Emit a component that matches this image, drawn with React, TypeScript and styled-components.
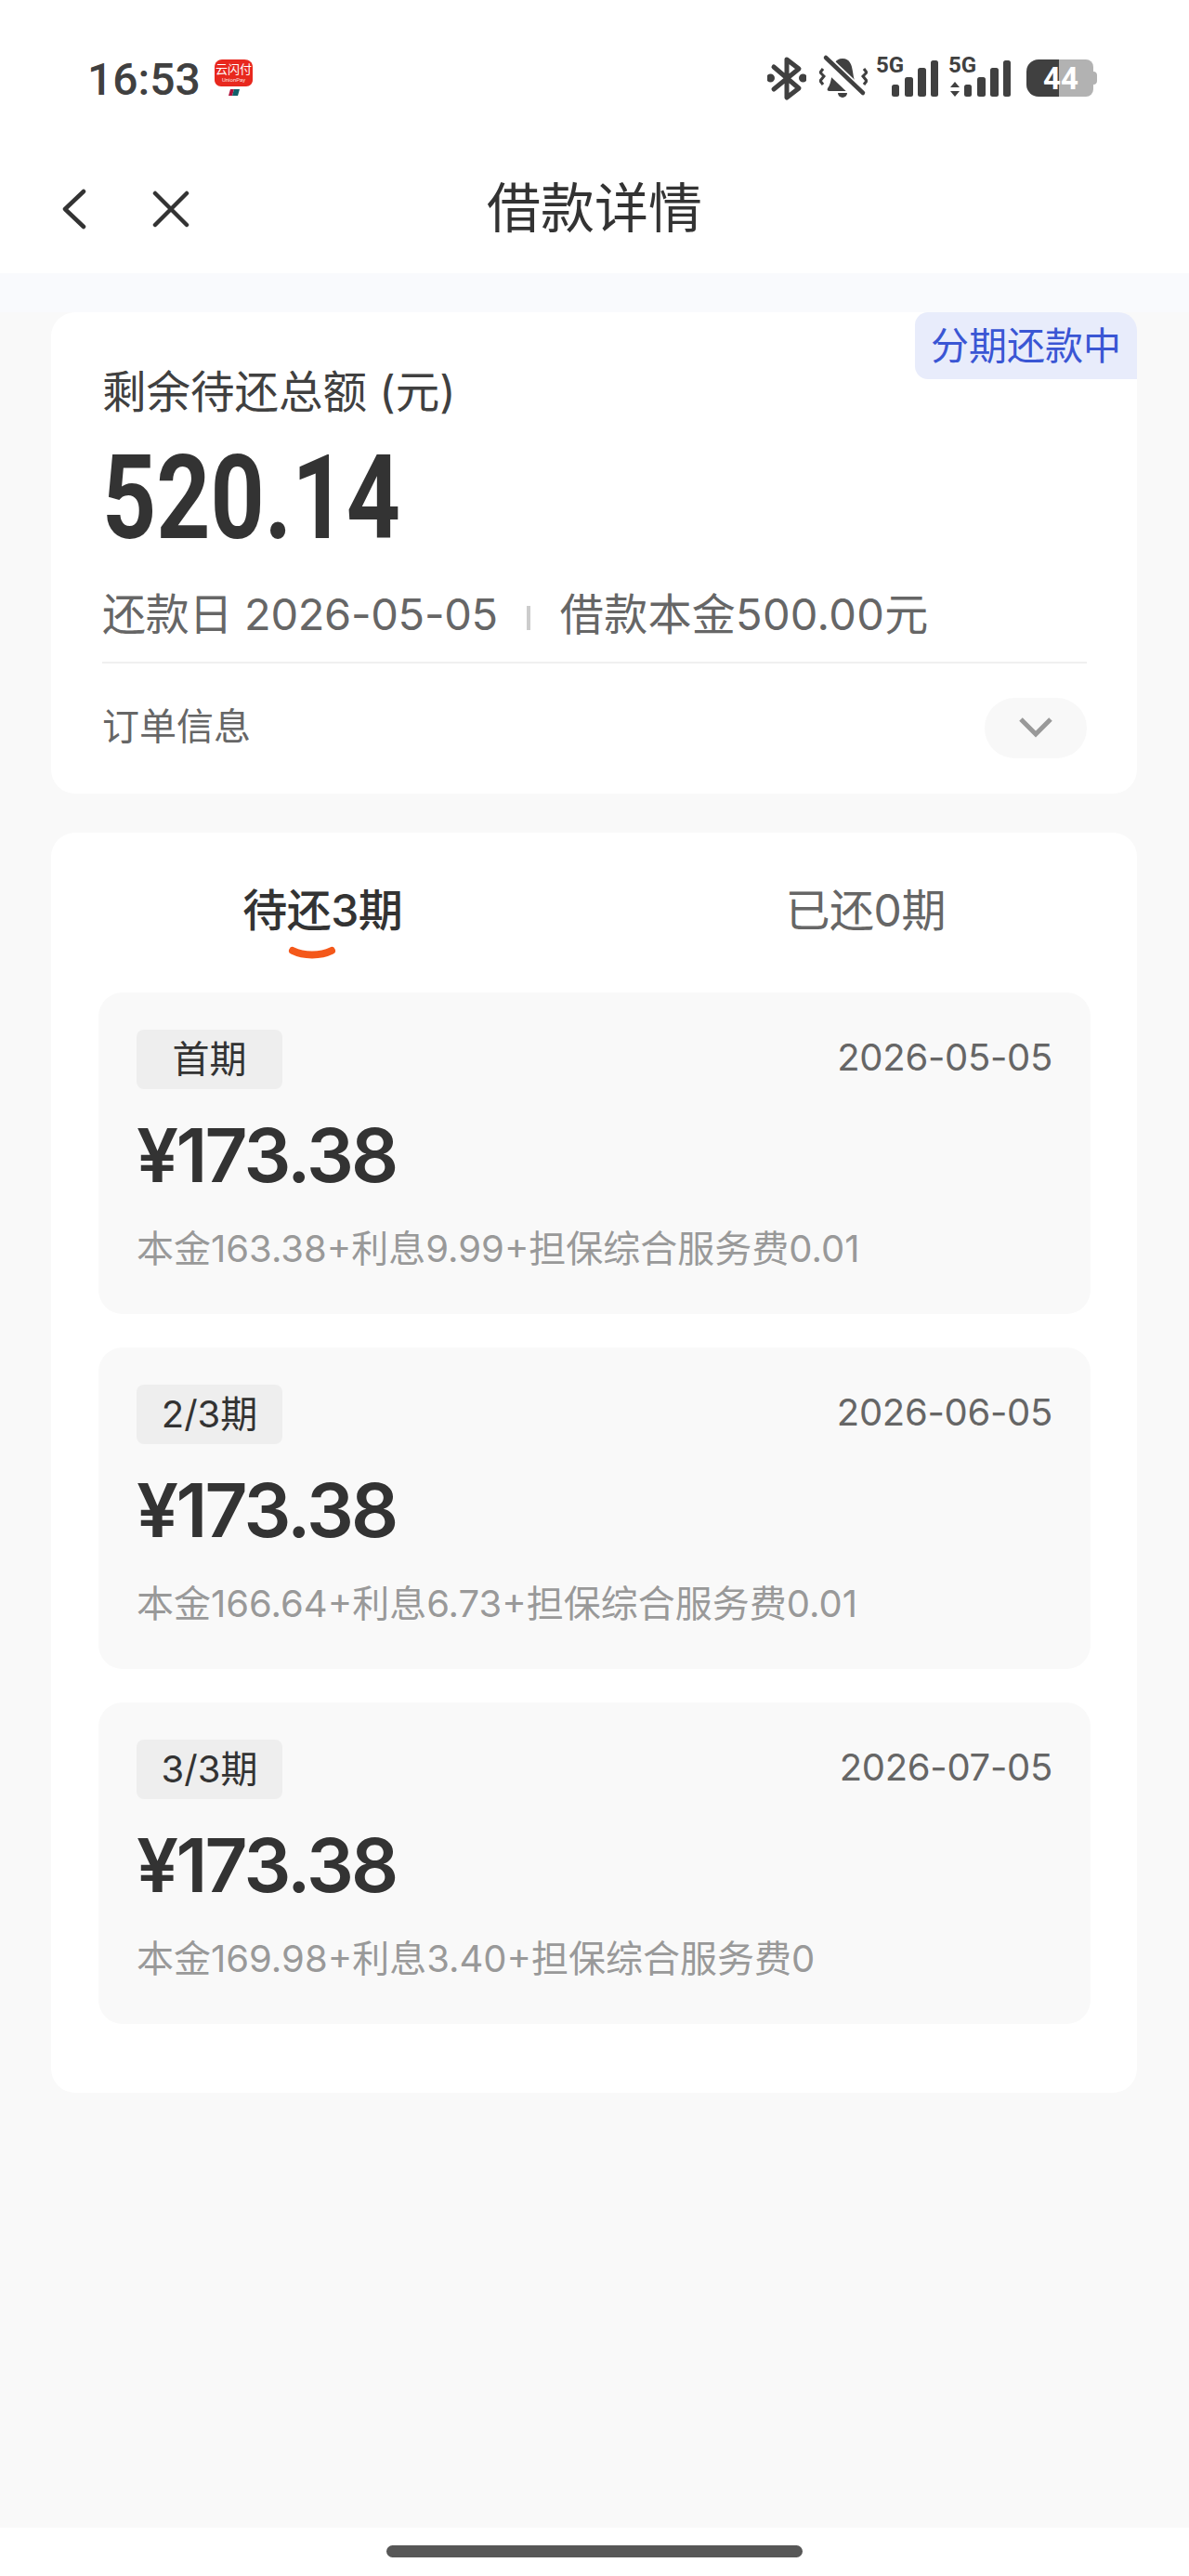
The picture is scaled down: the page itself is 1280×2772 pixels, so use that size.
import styled, { createGlobalStyle } from 'styled-components';

const GlobalStyle = createGlobalStyle`
  * { box-sizing: border-box; }
  html, body { margin: 0; padding: 0; background: #f9f9f9; }
  body { font-family: Inter, "Noto Sans CJK SC", sans-serif; }
`;

const Page = styled.div`
  width: 1280px;
  height: 2772px;
  display: flex;
  flex-direction: column;
  background: #f9f9f9;
  color: #333;
  overflow: hidden;
`;

const TopBar = styled.header`
  height: 294px;
  background: #fff;
  display: flex;
  flex-direction: column;
`;

const StatusBar = styled.div`
  height: 162px;
  padding: 55px 99px 0 94px;
  display: flex;
  justify-content: space-between;
  align-items: flex-start;
`;

const StatusLeft = styled.div`
  margin-top: 5px;
  display: flex;
  align-items: flex-start;
  gap: 14px;
`;

const Clock = styled.span`
  font: 500 48px/52px Roboto, sans-serif;
  color: #404040;
`;

const LogoMark = styled.svg`
  margin-top: 3px;
`;

const StatusIcons = styled.div`
  display: flex;
  align-items: flex-start;
`;

const StatusGlyph = styled.svg<{ $gap?: number; $top?: number }>`
  margin-left: ${p => p.$gap ?? 0}px;
  margin-top: ${p => p.$top ?? 0}px;
`;

const NavBar = styled.nav`
  position: relative;
  height: 122px;
  padding: 3px 0 0 67px;
  display: flex;
  align-items: center;
  gap: 71px;
`;

const Title = styled.h1`
  position: absolute;
  left: 0;
  right: 0;
  margin: 0 0 9px;
  text-align: center;
  font: 400 58px/70px "Noto Sans CJK SC", sans-serif;
  color: #333;
  pointer-events: none;
`;

const Band = styled.div`
  height: 42px;
  background: #f9fafd;
`;

const Main = styled.main`
  flex: 1;
  padding: 0 56px 0 55px;
  display: flex;
  flex-direction: column;
  gap: 42px;
`;

const Card = styled.section`
  position: relative;
  background: #fff;
  border-radius: 26px;
`;

const SummaryCard = styled(Card)`
  height: 518px;
  padding: 56px 54px 0 55px;
`;

const StateTag = styled.div`
  position: absolute;
  top: 0;
  right: 0;
  width: 239px;
  height: 72px;
  padding-bottom: 7px;
  background: #e8ecfb;
  border-radius: 14px 20px 0 14px;
  display: flex;
  align-items: center;
  justify-content: center;
  font: 400 41px/60px "Noto Sans CJK SC", sans-serif;
  color: #3a56d4;
`;

const SummaryLabel = styled.div`
  font: 400 47.5px/60px Inter, "Noto Sans CJK SC", sans-serif;
  color: #404040;
`;

const BigAmount = styled.div`
  margin-top: 22px;
  font: 700 127px/124px Roboto, sans-serif;
  color: #333;
  transform: scaleX(0.8);
  transform-origin: left center;
`;

const MetaRow = styled.div`
  margin-top: 32px;
  height: 62px;
  display: flex;
  align-items: center;
  font: 400 47px/62px Inter, "Noto Sans CJK SC", sans-serif;
  color: #666;
`;

const MetaText = styled.span<{ $spacing: number }>`
  letter-spacing: ${p => p.$spacing}px;
`;

const MetaDivider = styled.span`
  width: 4px;
  height: 26px;
  margin: 8px 32px 0 31px;
  background: #ccc;
`;

const Rule = styled.div`
  height: 2px;
  margin-top: 20px;
  background: #f0f0f0;
`;

const OrderRow = styled.div`
  height: 138px;
  display: flex;
  align-items: center;
  justify-content: space-between;
  font: 400 40px/50px "Noto Sans CJK SC", sans-serif;
  color: #666;
`;

const OrderLabel = styled.span`
  margin-bottom: 8px;
`;

const Toggle = styled.div`
  width: 110px;
  height: 65px;
  border-radius: 33px;
  background: #f8f8f8;
  display: flex;
  align-items: center;
  justify-content: center;
`;

const PlanCard = styled(Card)`
  height: 1356px;
`;

const Tabs = styled.div`
  height: 172px;
  display: grid;
  grid-template-columns: 1fr 1fr;
`;

const Tab = styled.div<{ $active?: boolean }>`
  position: relative;
  display: flex;
  justify-content: center;
  padding-top: 54px;
  font: ${p => (p.$active ? 500 : 400)} 48px/60px Inter, "Noto Sans CJK SC", sans-serif;
  letter-spacing: -0.5px;
  color: ${p => (p.$active ? '#333' : '#666')};
`;

const TabMark = styled.svg`
  position: absolute;
  left: calc(50% - 37px);
  top: 122px;
`;

const Installments = styled.div`
  margin: 0 50px 0 51px;
  display: flex;
  flex-direction: column;
  gap: 36px;
`;

const Installment = styled.article`
  height: 346px;
  padding: 40px 41px 0 41px;
  border-radius: 26px;
  background: #f9f9f9;
`;

const InstallmentHead = styled.div`
  display: flex;
  justify-content: space-between;
  align-items: flex-start;
`;

const Badge = styled.span`
  width: 157px;
  height: 64px;
  border-radius: 8px;
  background: #eee;
  display: flex;
  align-items: center;
  justify-content: center;
  font: 400 40px/64px Inter, "Noto Sans CJK SC", sans-serif;
  color: #333;
`;

const DueDate = styled.span`
  padding-top: 2px;
  font: 400 40px/56px Inter, sans-serif;
  letter-spacing: -0.3px;
  color: #666;
`;

const Amount = styled.div`
  margin-top: 21px;
  font: 560 80px/100px Inter, sans-serif;
  letter-spacing: -2.7px;
  color: #333;
`;

const Breakdown = styled.div`
  margin-top: 23px;
  font: 400 40px/56px Inter, "Noto Sans CJK SC", sans-serif;
  color: #999;
`;

const HomeArea = styled.div`
  height: 52px;
  background: #fff;
  display: flex;
  justify-content: center;
  padding-top: 19px;
`;

const HomeBar = styled.div`
  width: 448px;
  height: 13px;
  border-radius: 7px;
  background: #575757;
`;

const PayLogo = () => (
  <LogoMark width="44" height="42" viewBox="0 0 44 42">
    <path d="M9 1h24c5 0 9 3 9 8v14c0 4-3 7-7 7H8c-4 0-7-3-7-7V9c0-5 4-8 8-8z" fill="#e8281e" />
    <text x="21.5" y="16" textAnchor="middle" fontFamily="Noto Sans CJK SC" fontSize="13" fill="#fff">云闪付</text>
    <text x="21.5" y="25" textAnchor="middle" fontFamily="Roboto" fontSize="6" fill="#fff" opacity=".85">UnionPay</text>
    <path d="M18 33h4l-2 7h-4z" fill="#b0123c" />
    <path d="M22 33h6l-2 7h-6z" fill="#10606a" />
  </LogoMark>
);

const Signal = ({ roaming, gap }: { roaming?: boolean; gap: number }) => (
  <StatusGlyph $gap={gap} width="67" height="55" viewBox="0 0 67 55" fill="#404040">
    <text x="0" y="23" fontFamily="Roboto" fontWeight="700" fontSize="24">5G</text>
    {roaming && <path d="M2 39l5-6 5 6zM2 43l5 6 5-6z" />}
    <rect x="17" y="36" width="8" height="13" rx="2.5" />
    <rect x="31" y="28" width="9" height="21" rx="2.5" />
    <rect x="45" y="18" width="9" height="31" rx="2.5" />
    <rect x="59" y="10" width="8" height="39" rx="2.5" />
  </StatusGlyph>
);

const Battery = () => (
  <StatusGlyph $gap={17} $top={9} width="76" height="40" viewBox="0 0 76 40">
    <path d="M35 0h29a8 8 0 0 1 8 8v24a8 8 0 0 1-8 8H35z" fill="#b2b2b2" />
    <path d="M13 0h22v40H13A13 13 0 0 1 0 27V13A13 13 0 0 1 13 0z" fill="#404040" />
    <path d="M72 13c3 0 4 2 4 4v6c0 2-1 4-4 4z" fill="#b2b2b2" />
    <text x="37" y="32" textAnchor="middle" fontFamily="Roboto" fontWeight="700" fontSize="33" fill="#fff">44</text>
  </StatusGlyph>
);

const plans = [
  { badge: '首期', date: '2026-05-05', detail: '本金163.38+利息9.99+担保综合服务费0.01' },
  { badge: '2/3期', date: '2026-06-05', detail: '本金166.64+利息6.73+担保综合服务费0.01' },
  { badge: '3/3期', date: '2026-07-05', detail: '本金169.98+利息3.40+担保综合服务费0' },
];

export default function App() {
  return (
    <Page>
      <GlobalStyle />
      <TopBar>
        <StatusBar>
          <StatusLeft>
            <Clock>16:53</Clock>
            <PayLogo />
          </StatusLeft>
          <StatusIcons>
            <StatusGlyph width="42" height="55" viewBox="0 0 42 55" fill="none" stroke="#404040" strokeWidth="5" strokeLinejoin="round" strokeLinecap="round">
              <path d="M7 17l27 23-13 10V9l13 10L7 41" />
              <circle cx="3.5" cy="29" r="2" fill="#404040" />
              <circle cx="38.5" cy="29" r="2" fill="#404040" />
            </StatusGlyph>
            <StatusGlyph $gap={14} width="52" height="55" viewBox="0 0 52 55">
              <path d="M25 8c8 0 10 7 11 14 1 8 3 14 5 18 1 2 0 3-2 3H11c-2 0-3-1-2-3 3-4 4-10 5-18 1-7 3-14 11-14z" fill="#404040" />
              <path d="M20 45h10a5 5 0 0 1-10 0z" fill="#404040" />
              <path d="M3 11l40 38" stroke="#fff" strokeWidth="11" />
              <path d="M7 7l40 38" stroke="#fff" strokeWidth="8" />
              <path d="M7 7l40 38" stroke="#404040" strokeWidth="4.5" strokeLinecap="round" />
              <path d="M4 19L1 23l4 4-4 5 3 4M48 19l3 4-4 4 4 5-3 4" stroke="#404040" strokeWidth="3" fill="none" />
            </StatusGlyph>
            <Signal gap={9} />
            <Signal roaming gap={11} />
            <Battery />
          </StatusIcons>
        </StatusBar>
        <NavBar>
          <svg width="26" height="44" viewBox="0 0 26 44" fill="none" stroke="#333" strokeWidth="4.5" strokeLinecap="round" strokeLinejoin="round">
            <path d="M23 3L3 22l20 19" />
          </svg>
          <svg width="40" height="40" viewBox="0 0 40 40" fill="none" stroke="#333" strokeWidth="4.5" strokeLinecap="round">
            <path d="M3 3l34 34M37 3L3 37" />
          </svg>
          <Title>借款详情</Title>
        </NavBar>
      </TopBar>
      <Band />
      <Main>
        <SummaryCard>
          <StateTag>分期还款中</StateTag>
          <SummaryLabel>剩余待还总额 (元)</SummaryLabel>
          <BigAmount>520.14</BigAmount>
          <MetaRow>
            <MetaText $spacing={-0.3}>还款日 2026-05-05</MetaText>
            <MetaDivider />
            <MetaText $spacing={0.3}>借款本金500.00元</MetaText>
          </MetaRow>
          <Rule />
          <OrderRow>
            <OrderLabel>订单信息</OrderLabel>
            <Toggle>
              <svg width="36" height="22" viewBox="0 0 36 22" fill="none" stroke="#999" strokeWidth="5">
                <path d="M2 2l16 16L34 2" />
              </svg>
            </Toggle>
          </OrderRow>
        </SummaryCard>
        <PlanCard>
          <Tabs>
            <Tab $active>
              待还3期
              <TabMark width="52" height="15" viewBox="0 0 52 15" fill="none" stroke="#f4581a" strokeWidth="8" strokeLinecap="round">
                <path d="M5 5c12 6 30 6 42 0" />
              </TabMark>
            </Tab>
            <Tab>已还0期</Tab>
          </Tabs>
          <Installments>
            {plans.map(plan => (
              <Installment key={plan.date}>
                <InstallmentHead>
                  <Badge>{plan.badge}</Badge>
                  <DueDate>{plan.date}</DueDate>
                </InstallmentHead>
                <Amount>¥173.38</Amount>
                <Breakdown>{plan.detail}</Breakdown>
              </Installment>
            ))}
          </Installments>
        </PlanCard>
      </Main>
      <HomeArea>
        <HomeBar />
      </HomeArea>
    </Page>
  );
}
